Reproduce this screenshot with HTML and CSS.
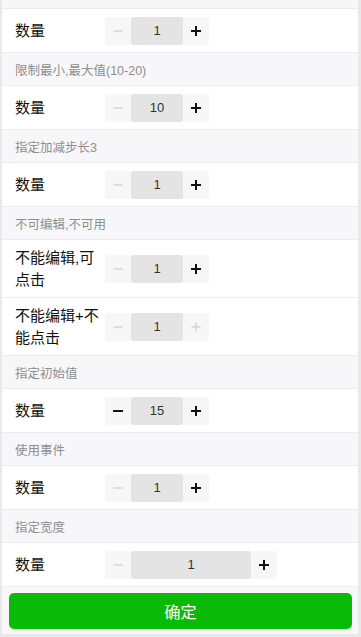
FILE: index.html
```html
<!DOCTYPE html>
<html lang="zh-CN">
<head>
<meta charset="utf-8">
<title>Stepper</title>
<link rel="stylesheet" href="styles.css">
</head>
<body>
<div class="phone">
  <div class="scroll">
    <div class="list">
      <div class="hd">默认</div>
      <div class="row">
        <div class="label">数量</div>
        <div class="stepper">
          <span class="btn-s off"><svg viewBox="0 0 10 10"><rect x="0.5" y="4.5" width="9" height="1"/></svg></span>
          <span class="val">1</span>
          <span class="btn-s on"><svg viewBox="0 0 10 10"><rect x="0" y="4" width="10" height="2"/><rect x="4" y="0" width="2" height="10"/></svg></span>
        </div>
      </div>

      <div class="hd">限制最小,最大值(10-20)</div>
      <div class="row">
        <div class="label">数量</div>
        <div class="stepper">
          <span class="btn-s off"><svg viewBox="0 0 10 10"><rect x="0.5" y="4.5" width="9" height="1"/></svg></span>
          <span class="val">10</span>
          <span class="btn-s on"><svg viewBox="0 0 10 10"><rect x="0" y="4" width="10" height="2"/><rect x="4" y="0" width="2" height="10"/></svg></span>
        </div>
      </div>

      <div class="hd">指定加减步长3</div>
      <div class="row">
        <div class="label">数量</div>
        <div class="stepper">
          <span class="btn-s off"><svg viewBox="0 0 10 10"><rect x="0.5" y="4.5" width="9" height="1"/></svg></span>
          <span class="val">1</span>
          <span class="btn-s on"><svg viewBox="0 0 10 10"><rect x="0" y="4" width="10" height="2"/><rect x="4" y="0" width="2" height="10"/></svg></span>
        </div>
      </div>

      <div class="hd">不可编辑,不可用</div>
      <div class="row">
        <div class="label">不能编辑,可点击</div>
        <div class="stepper">
          <span class="btn-s off"><svg viewBox="0 0 10 10"><rect x="0.5" y="4.5" width="9" height="1"/></svg></span>
          <span class="val">1</span>
          <span class="btn-s on"><svg viewBox="0 0 10 10"><rect x="0" y="4" width="10" height="2"/><rect x="4" y="0" width="2" height="10"/></svg></span>
        </div>
      </div>
      <div class="row">
        <div class="label">不能编辑+不能点击</div>
        <div class="stepper">
          <span class="btn-s off"><svg viewBox="0 0 10 10"><rect x="0.5" y="4.5" width="9" height="1"/></svg></span>
          <span class="val">1</span>
          <span class="btn-s off"><svg viewBox="0 0 10 10"><rect x="0.5" y="4.5" width="9" height="1"/><rect x="4.5" y="0.5" width="1" height="9"/></svg></span>
        </div>
      </div>

      <div class="hd">指定初始值</div>
      <div class="row">
        <div class="label">数量</div>
        <div class="stepper">
          <span class="btn-s on"><svg viewBox="0 0 10 10"><rect x="0" y="4" width="10" height="2"/></svg></span>
          <span class="val">15</span>
          <span class="btn-s on"><svg viewBox="0 0 10 10"><rect x="0" y="4" width="10" height="2"/><rect x="4" y="0" width="2" height="10"/></svg></span>
        </div>
      </div>

      <div class="hd">使用事件</div>
      <div class="row">
        <div class="label">数量</div>
        <div class="stepper">
          <span class="btn-s off"><svg viewBox="0 0 10 10"><rect x="0.5" y="4.5" width="9" height="1"/></svg></span>
          <span class="val">1</span>
          <span class="btn-s on"><svg viewBox="0 0 10 10"><rect x="0" y="4" width="10" height="2"/><rect x="4" y="0" width="2" height="10"/></svg></span>
        </div>
      </div>

      <div class="hd">指定宽度</div>
      <div class="row">
        <div class="label">数量</div>
        <div class="stepper">
          <span class="btn-s off"><svg viewBox="0 0 10 10"><rect x="0.5" y="4.5" width="9" height="1"/></svg></span>
          <span class="val wide">1</span>
          <span class="btn-s on"><svg viewBox="0 0 10 10"><rect x="0" y="4" width="10" height="2"/><rect x="4" y="0" width="2" height="10"/></svg></span>
        </div>
      </div>
    </div>
  </div>
  <div class="footer">
    <button class="confirm" type="button">确定</button>
  </div>
</div>
</body>
</html>
```
FILE: styles.css
```css
* {
  box-sizing: border-box;
}

html, body {
  margin: 0;
  padding: 0;
  background: #ffffff;
}

body {
  font-family: "Liberation Sans", "Noto Sans CJK SC", sans-serif;
  color: #000;
}

.phone {
  width: 361px;
  height: 637px;
  display: flex;
  flex-direction: column;
  border-left: 2px solid #e9e9e9;
  border-right: 3px solid #e9e9e9;
  border-bottom: 3px solid #e9e9e9;
  background: #fff;
}

.scroll {
  flex: 1;
  overflow: hidden;
}

.list {
  margin-top: -24px;
}

.hd {
  padding: 9px 13px 5px;
  line-height: 18px;
  font-size: 12.5px;
  color: #8e8e8e;
  background: #f7f7fa;
  border-bottom: 1px solid #ececf0;
  white-space: nowrap;
}

.row {
  display: flex;
  align-items: center;
  min-height: 44px;
  padding: 7px 0 7px 13px;
  background: #fff;
  border-bottom: 1px solid #ececf0;
}

.label {
  width: 90px;
  flex: none;
  font-size: 15px;
  line-height: 21.5px;
  color: #111;
}

.stepper {
  display: flex;
  height: 28px;
}

.btn-s {
  width: 26px;
  height: 28px;
  display: flex;
  align-items: center;
  justify-content: center;
  background: #f7f7f7;
  border-radius: 2px;
}

.btn-s svg {
  width: 10px;
  height: 10px;
  display: block;
}

.btn-s.on svg {
  fill: #111;
}

.btn-s.off svg {
  fill: #c4c4c4;
}

.val {
  width: 52px;
  height: 28px;
  display: flex;
  align-items: center;
  justify-content: center;
  background: #e4e4e4;
  border-radius: 2px;
  font-size: 13px;
  color: #333;
}

.val.wide {
  width: 120px;
}

.footer {
  flex: none;
  height: 47px;
  padding: 6px 6px 5px 7px;
  background: #f7f7fa;
}

.confirm {
  display: block;
  width: 100%;
  height: 36px;
  border: none;
  border-radius: 5px;
  background: #09bb07;
  color: #fff;
  font-family: "Liberation Sans", "Noto Sans CJK SC", sans-serif;
  font-size: 16px;
  padding: 0;
}
```
